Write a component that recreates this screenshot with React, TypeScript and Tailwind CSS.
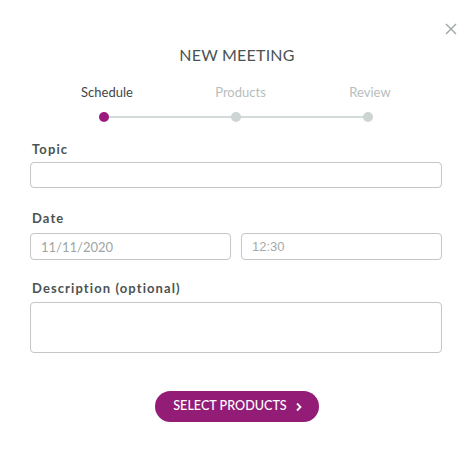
import React from "react";

export default function App() {
  const lato = { fontFamily: "Lato, 'Noto Sans', sans-serif" };
  return (
    <div className="relative w-[474px] h-[455px] bg-white" style={lato}>
      <button className="absolute left-[444px] top-[22px] w-[13px] h-[13px] flex items-center justify-center">
        <svg width="12" height="12" viewBox="0 0 12 12" fill="none" stroke="#9ea7a7" strokeWidth="1.4">
          <path d="M1 1 L11 11 M11 1 L1 11" />
        </svg>
      </button>
      <div className="pl-[30px] pr-[32px] pt-[45px]">
        <h1 className="text-center text-[16px] leading-[20px] text-[#4a5353] tracking-[0.2px] ml-[2px]">NEW MEETING</h1>

        <div className="mt-[18px] ml-[8px] w-[396px]">
          <div className="grid grid-cols-3 text-[13px] leading-[18px]">
            <div className="text-center pl-[6px] text-[#3f4646]">Schedule</div>
            <div className="text-center pl-[9px] text-[#b7bdbd]">Products</div>
            <div className="text-center pl-[4px] text-[#b7bdbd]">Review</div>
          </div>
          <div className="relative mt-[11px] h-[10px] grid grid-cols-3">
            <div className="absolute left-[66px] right-[66px] top-[4px] h-[2px] bg-[#d3dada]" />
            <div className="flex justify-center"><div className="relative w-[10px] h-[10px] rounded-full bg-[#9a1a7d]" /></div>
            <div className="flex justify-center"><div className="relative w-[10px] h-[10px] rounded-full bg-[#ccd4d4]" /></div>
            <div className="flex justify-center"><div className="relative w-[10px] h-[10px] rounded-full bg-[#ccd4d4]" /></div>
          </div>
        </div>

        <label className="block mt-[19px] pl-[2px] text-[13px] leading-[16px] font-bold tracking-[1.1px] text-[#4b5353]">Topic</label>
        <input className="block mt-[5px] w-full h-[26px] rounded-[4px] border border-[#c2c6c6] outline-none" />

        <label className="block mt-[22px] pl-[2px] text-[13px] leading-[16px] font-bold tracking-[1.1px] text-[#4b5353]">Date</label>
        <div className="mt-[7px] flex gap-[10px]">
          <input
            className="w-[201px] h-[27px] rounded-[4px] border border-[#c2c6c6] px-[10px] text-[13px] text-[#9aa1a1] placeholder:text-[#9fa5a5] outline-none"
            style={lato}
            placeholder="11/11/2020"
          />
          <input
            className="flex-1 h-[27px] rounded-[4px] border border-[#c2c6c6] px-[10px] text-[13px] placeholder:text-[#a5aaaa] outline-none"
            style={{ fontFamily: "'Liberation Sans', Arial, sans-serif" }}
            placeholder="12:30"
          />
        </div>

        <label className="block mt-[20px] pl-[2px] text-[13px] leading-[16px] font-bold tracking-[1.1px] text-[#4b5353]">Description (optional)</label>
        <textarea className="block mt-[6px] w-full h-[51px] rounded-[4px] border border-[#c2c6c6] resize-none outline-none" />

        <div className="mt-[38px] flex justify-center">
          <button className="ml-[2px] w-[164px] h-[31px] rounded-full bg-[#921c76] text-white text-[12.6px] font-medium flex items-center justify-center gap-[8px] pl-[2px]">
            <span>SELECT PRODUCTS</span>
            <svg width="8" height="10" viewBox="0 0 8 10" fill="none" stroke="white" strokeWidth="1.8">
              <path d="M2 1.5 L5.5 5 L2 8.5" />
            </svg>
          </button>
        </div>
      </div>
    </div>
  );
}
